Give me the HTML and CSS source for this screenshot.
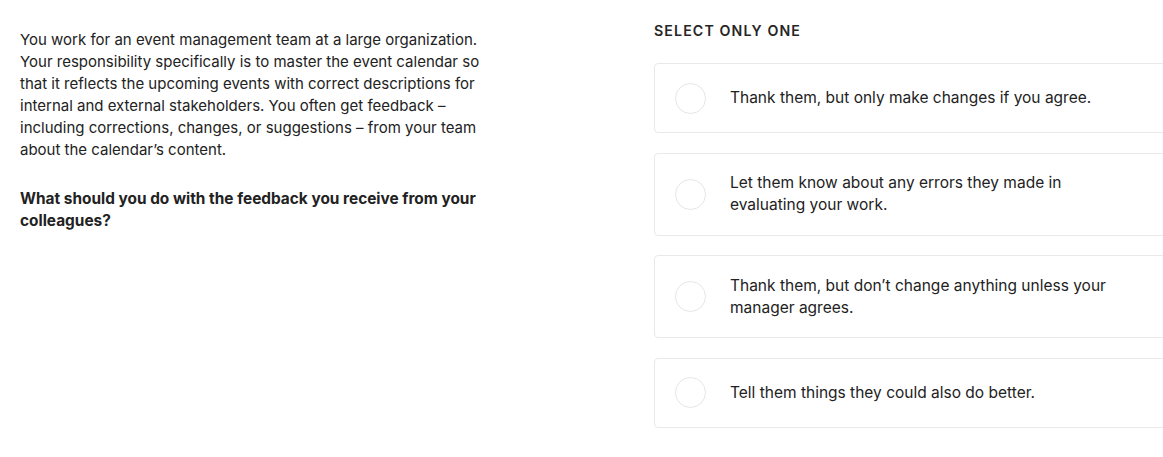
FILE: index.html
```html
<!DOCTYPE html>
<html lang="en">
<head>
<meta charset="utf-8">
<link rel="stylesheet" href="styles.css">
</head>
<body>
<div class="page">
  <section class="prompt">
    <p class="scenario">You work for an event management team at a large organization.<br>Your responsibility specifically is to master the event calendar so<br>that it reflects the upcoming events with correct descriptions for<br>internal and external stakeholders. You often get feedback –<br>including corrections, changes, or suggestions – from your team<br>about the calendar’s content.</p>
    <p class="question">What should you do with the feedback you receive from your colleagues?</p>
  </section>
  <section class="answers">
    <div class="label">SELECT ONLY ONE</div>
    <div class="options">
      <div class="option"><span class="radio"></span><span class="text">Thank them, but only make changes if you agree.</span></div>
      <div class="option"><span class="radio"></span><span class="text">Let them know about any errors they made in evaluating your work.</span></div>
      <div class="option"><span class="radio"></span><span class="text">Thank them, but don’t change anything unless your manager agrees.</span></div>
      <div class="option"><span class="radio"></span><span class="text">Tell them things they could also do better.</span></div>
    </div>
  </section>
</div>
</body>
</html>
```
FILE: styles.css
```css
html, body {
  margin: 0;
  padding: 0;
  background: #ffffff;
  overflow: hidden;
}
body {
  font-family: Inter, "Liberation Sans", sans-serif;
  color: #222222;
  font-size: 15px;
  line-height: 22px;
}
.page {
  display: flex;
  padding: 18px 0 0 20px;
  width: 1300px;
}
.prompt {
  width: 481px;
  flex: none;
  margin-right: 153px;
}
.scenario {
  margin: 0 0 27px 0;
  padding-top: 11px;
  white-space: nowrap;
}
.question {
  margin: 0;
  font-weight: 700;
  font-size: 15.4px;
}
.answers {
  width: 560px;
  flex: none;
}
.label {
  font-weight: 600;
  font-size: 14.2px;
  letter-spacing: 1.1px;
  line-height: 26px;
  color: #262626;
  margin-bottom: 19px;
}
.options {
  display: flex;
  flex-direction: column;
  gap: 19.5px;
}
.option {
  display: flex;
  align-items: center;
  gap: 24px;
  padding: 18.5px 20px;
  border: 1px solid #e9e9e9;
  border-radius: 4px;
}
.radio {
  width: 29px;
  height: 29px;
  border: 1.5px solid #e6e6e6;
  border-radius: 50%;
  flex: none;
}
.text {
  color: #222222;
  font-size: 15.5px;
  max-width: 392px;
}
```
